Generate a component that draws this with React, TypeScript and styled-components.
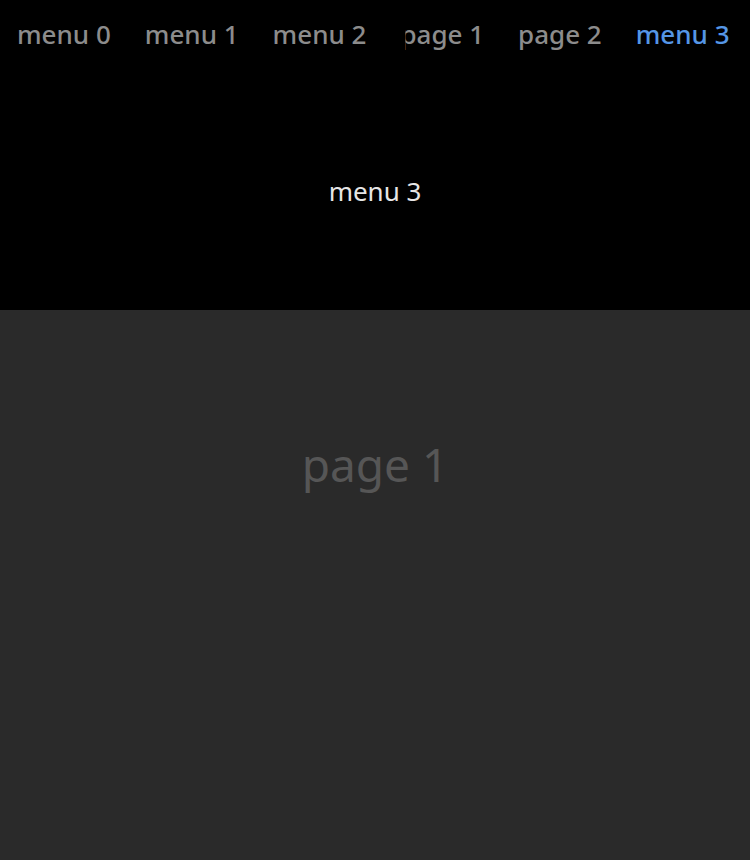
import React from "react";
import styled, { createGlobalStyle } from "styled-components";

const Global = createGlobalStyle`
  html, body { margin: 0; padding: 0; background: #2a2a2a; }
  body { font-family: "Noto Sans", "Open Sans", sans-serif; }
`;

const Page = styled.div`
  width: 750px;
  height: 860px;
  display: flex;
  flex-direction: column;
  background: #2a2a2a;
`;

const Hero = styled.header`
  height: 310px;
  background: #000;
  display: flex;
  flex-direction: column;
`;

const TabBar = styled.nav`
  height: 70px;
  display: flex;
  align-items: center;
`;

const Tab = styled.div<{ $active?: boolean; $clip?: number }>`
  padding: 0 17px;
  font-size: 26px;
  line-height: 1.2;
  font-weight: 500;
  color: ${(p) => (p.$active ? "#5596e6" : "#8c8c8c")};
  white-space: nowrap;
  ${(p) => (p.$clip ? `clip-path: inset(0 0 0 ${p.$clip}px);` : "")}
`;

const HeroBody = styled.div`
  flex: 1;
  display: flex;
  align-items: center;
  justify-content: center;
  color: #e6e6e6;
  font-size: 26px;
  padding-top: 2px;
`;

const Content = styled.main`
  flex: 1;
  display: flex;
  justify-content: center;
  padding-top: 123px;
  color: #565656;
  font-size: 46px;
`;

const tabs = [
  { label: "menu 0" },
  { label: "menu 1" },
  { label: "menu 2" },
  { label: "page 1", clip: 22 },
  { label: "page 2" },
  { label: "menu 3", active: true },
];

export default function App() {
  return (
    <Page>
      <Global />
      <Hero>
        <TabBar>
          {tabs.map((t) => (
            <Tab key={t.label} $active={t.active} $clip={t.clip}>
              {t.label}
            </Tab>
          ))}
        </TabBar>
        <HeroBody>menu 3</HeroBody>
      </Hero>
      <Content>page 1</Content>
    </Page>
  );
}
